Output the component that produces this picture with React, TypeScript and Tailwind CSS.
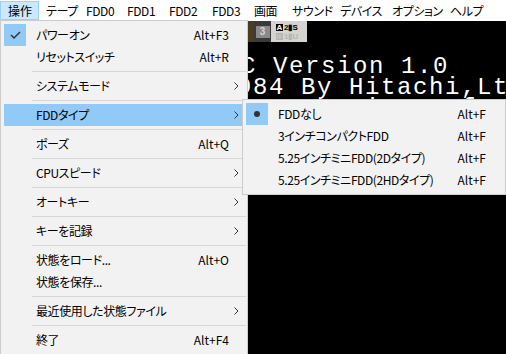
import React from "react";

type Item =
	| { sep: true }
	| { label: string; sc?: string; sub?: boolean; checked?: boolean; active?: boolean; sep?: false };

const mainItems: Item[] = [
	{ label: "パワーオン", sc: "Alt+F3", checked: true },
	{ label: "リセットスイッチ", sc: "Alt+R" },
	{ sep: true },
	{ label: "システムモード", sub: true },
	{ sep: true },
	{ label: "FDDタイプ", sub: true, active: true },
	{ sep: true },
	{ label: "ポーズ", sc: "Alt+Q" },
	{ sep: true },
	{ label: "CPUスピード", sub: true },
	{ sep: true },
	{ label: "オートキー", sub: true },
	{ sep: true },
	{ label: "キーを記録", sub: true },
	{ sep: true },
	{ label: "状態をロード...", sc: "Alt+O" },
	{ label: "状態を保存..." },
	{ sep: true },
	{ label: "最近使用した状態ファイル", sub: true },
	{ sep: true },
	{ label: "終了", sc: "Alt+F4" },
];

const fddItems = [
	{ label: "FDDなし", sc: "Alt+F", bullet: true },
	{ label: "3インチコンパクトFDD", sc: "Alt+F" },
	{ label: "5.25インチミニFDD(2Dタイプ)", sc: "Alt+F" },
	{ label: "5.25インチミニFDD(2HDタイプ)", sc: "Alt+F" },
];

// widths measured from the text starts of the menu bar
const menuBar = [
	{ t: "操作", w: "w-[39px]" },
	{ t: "テープ", w: "w-[40px]" },
	{ t: "FDD0", w: "w-[41px]" },
	{ t: "FDD1", w: "w-[42px]" },
	{ t: "FDD2", w: "w-[43px]" },
	{ t: "FDD3", w: "w-[42px]" },
	{ t: "画面", w: "w-[38px]" },
	{ t: "サウンド", w: "w-[48px]" },
	{ t: "デバイス", w: "w-[52px]" },
	{ t: "オプション", w: "w-[58px]" },
	{ t: "ヘルプ", w: "w-[40px]" },
];

const Chevron = () => (
	<svg width="5" height="8" viewBox="0 0 5 8" className="ml-[5px]">
		<path d="M0.5 0.5 L4 4 L0.5 7.5" fill="none" stroke="#333" strokeWidth="1" />
	</svg>
);

const Check = () => (
	<svg width="22" height="22" viewBox="0 0 22 22">
		<path d="M7 11 L10 14 L16 8" fill="none" stroke="#333" strokeWidth="1.5" />
	</svg>
);

const MenuRow = ({ item }: { item: Item }) => {
	if (item.sep) {
		return (
			<div className="h-[7px] flex items-center ml-[28px] mr-[-2px]">
				<div className="h-px w-full bg-[#d7d7d7]" />
			</div>
		);
	}
	return (
		<div className={`flex h-[22px] items-center ${item.active ? "bg-[#91c9f7]" : ""}`}>
			<div className={`w-[22px] h-[22px] ${item.checked ? "bg-[#91c9f7]" : ""}`}>{item.checked && <Check />}</div>
			<span className="flex-1 pl-[10px] whitespace-nowrap tracking-[-0.4px]">{item.label}</span>
			<span className="whitespace-nowrap">{item.sc}</span>
			<div className="w-[15px] flex items-center">{item.sub && <Chevron />}</div>
		</div>
	);
};

export default function App() {
	return (
		<div className="relative w-[506px] h-[354px] overflow-hidden bg-black text-[12px] text-black font-['Noto_Sans_CJK_JP',sans-serif] [font-feature-settings:'palt']">
			<div className="h-[21px] bg-white flex items-start pt-[1px] overflow-hidden">
				{menuBar.map((m, i) => (
					<div
						key={m.t}
						className={`${m.w} h-[19px] shrink-0 whitespace-nowrap pl-[7px] flex items-center border-y ${
							i === 0 ? "bg-[#cce8ff] border-[#99d1ff] border-x" : "border-transparent"
						} ${i === 0 ? "" : "tracking-[-0.4px]"}`}
					>
						{m.t}
					</div>
				))}
			</div>

			<div className="flex flex-col h-[333px]">
				<div className="flex h-[21px]">
					<div className="w-[254px] bg-gradient-to-r from-[#1a1408] to-[#4c3d20]" />
					<div className="w-[17px] bg-[#3a3a3a] flex items-center justify-center">
						<div className="h-[12px] w-[14px] bg-[#8a8a8a] text-[#d4d4d4] text-[10px] leading-[12px] font-bold text-center font-['Liberation_Sans',sans-serif]">
							3
						</div>
					</div>
					<div className="w-[36px] bg-[#d6d4d0] flex flex-col justify-center gap-[2px] pl-[5px] font-['Liberation_Sans',sans-serif] text-[8px] leading-[7px] font-bold">
						<div className="flex items-center gap-[1px]">
							<span className="w-[7px] h-[7px] bg-black text-white text-center">A</span>
							<span className="text-black">2▮S</span>
						</div>
						<div className="flex items-center gap-[1px] text-[#b4b4b4]">
							<span className="w-[7px] h-[7px] border border-[#b4b4b4] text-center leading-[5px]">B</span>
							<span>1▮U</span>
						</div>
					</div>
				</div>
				<div className="pt-[14px] pl-[157px] text-white whitespace-pre font-['Liberation_Mono',monospace] text-[24px] leading-[21px] tracking-[1.6px]">
					<div className="ml-[20px]">BASIC Version 1.0</div>
					<div>(C) 1984 By Hitachi,Ltd.</div>
					<div>(C) 1988 By Microsoft</div>
				</div>
			</div>

			<div className="absolute top-[20px] left-0 w-[248px] bg-[#f2f2f2] border border-[#cccccc] p-[3px]">
				{mainItems.map((it, i) => (
					<MenuRow key={i} item={it} />
				))}
			</div>

			<div className="absolute top-[99px] left-[242px] w-[264px] bg-[#f2f2f2] border border-[#cccccc] p-[3px]">
				{fddItems.map((it) => (
					<div key={it.label} className="flex h-[22px] items-center">
						<div className={`w-[22px] h-[22px] flex items-center justify-center ${it.bullet ? "bg-[#91c9f7]" : ""}`}>
							{it.bullet && <div className="w-[6px] h-[6px] rounded-full bg-[#333]" />}
						</div>
						<span className="flex-1 pl-[10px] whitespace-nowrap tracking-[-0.4px]">{it.label}</span>
						<span className="whitespace-nowrap">{it.sc}</span>
						<div className="w-[16px]" />
					</div>
				))}
			</div>
		</div>
	);
}
